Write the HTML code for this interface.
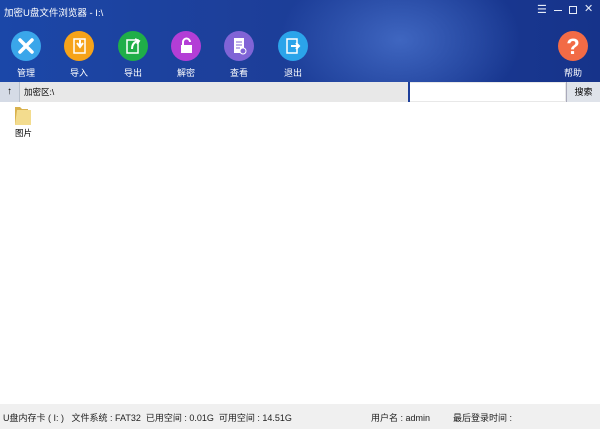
<!DOCTYPE html>
<html><head><meta charset="utf-8"><style>
*{margin:0;padding:0;box-sizing:border-box}
body{width:600px;height:429px;overflow:hidden;background:#fff;font-family:"Liberation Sans","Noto Sans CJK SC",sans-serif;position:relative}
#hd{position:absolute;left:0;top:0;width:600px;height:82px;background:radial-gradient(ellipse 120px 80px at 400px 40px,#3f66c0 0%,rgba(40,80,170,0) 100%),linear-gradient(90deg,#1b47a8 0%,#1d3f9a 40%,#1a3a94 70%,#16338a 100%)}
.t{position:absolute;left:4px;top:5px;color:#fff;font-size:9.5px}
.b{position:absolute;top:31px;width:30px;height:30px;border-radius:50%}
.b svg{position:absolute;left:0;top:0}
.l{position:absolute;top:66px;color:#fff;font-size:9px;width:40px;text-align:center}
#bar{position:absolute;top:82px;left:0;width:600px;height:20px;background:#e8e8e8}
.wc{position:absolute;top:4px;color:#e6ecf8;font-size:11px}
</style></head><body>
<div id="hd">
<div class="t">加密U盘文件浏览器 - I:\</div>
<div class="wc" style="left:537px;top:3px">☰</div>
<div style="position:absolute;left:554px;top:10px;width:8px;height:1px;background:#e6ecf8"></div>
<div style="position:absolute;left:569px;top:6px;width:8px;height:8px;border:1px solid #e6ecf8"></div>
<div class="wc" style="left:584px;top:2px">✕</div>

<div class="b" style="left:11px;background:#3aa6ea"><svg width="30" height="30"><path d="M9 9l12 12M21 9l-12 12" stroke="#fff" stroke-width="3.5" stroke-linecap="round"/></svg></div>
<div class="l" style="left:6px">管理</div>
<div class="b" style="left:64px;background:#f6a31a"><svg width="30" height="30"><rect x="10" y="8" width="11" height="14" fill="none" stroke="#fff" stroke-width="1.5"/><path d="M13 12l3 4 3-4M16 9v7" stroke="#fff" stroke-width="2" fill="none"/></svg></div>
<div class="l" style="left:59px">导入</div>
<div class="b" style="left:118px;background:#1fae48"><svg width="30" height="30"><rect x="9" y="9" width="11" height="13" fill="none" stroke="#fff" stroke-width="1.5"/><path d="M14 18c0-4 2-7 6-8M17 8l4 2-2 3" stroke="#fff" stroke-width="2" fill="none"/></svg></div>
<div class="l" style="left:113px">导出</div>
<div class="b" style="left:171px;background:#b33ed6"><svg width="30" height="30"><rect x="10" y="14" width="11" height="8" fill="#fff"/><path d="M12 14v-3a3.5 3.5 0 0 1 7 0" stroke="#fff" stroke-width="2" fill="none"/></svg></div>
<div class="l" style="left:166px">解密</div>
<div class="b" style="left:224px;background:#8064d6"><svg width="30" height="30"><rect x="10" y="7" width="10" height="15" fill="#fff"/><path d="M12 11h6M12 14h6M12 17h4" stroke="#8064d6"/><circle cx="19" cy="20" r="3" fill="#8064d6" stroke="#fff"/></svg></div>
<div class="l" style="left:219px">查看</div>
<div class="b" style="left:278px;background:#2ba4ea"><svg width="30" height="30"><rect x="9" y="8" width="10" height="14" fill="none" stroke="#fff" stroke-width="1.5"/><path d="M13 15h8M18 12l3 3-3 3" stroke="#fff" stroke-width="2" fill="none"/></svg></div>
<div class="l" style="left:273px">退出</div>
<div class="b" style="left:558px;background:#f26b46"><svg width="30" height="30"><text x="15" y="23" font-size="22" font-weight="bold" fill="#fff" text-anchor="middle" font-family="Liberation Sans">?</text></svg></div>
<div class="l" style="left:553px">帮助</div>
</div>
<div id="bar">
<div style="position:absolute;left:0;top:0;width:20px;height:20px;background:#d5dbe6;border-right:1px solid #b8c0cc;font-size:10px;text-align:center;line-height:20px">↑</div>
<div style="position:absolute;left:24px;top:4px;font-size:8.5px">加密区:\</div>
<div style="position:absolute;left:408px;top:0;width:2px;height:20px;background:#1d3f9a"></div>
<div style="position:absolute;left:410px;top:1px;width:155px;height:18px;background:#fff"></div>
<div style="position:absolute;left:566px;top:0;width:34px;height:20px;background:#dfe3ea;border-left:1px solid #aab;font-size:9px;text-align:center;line-height:20px">搜索</div>
</div>
<svg style="position:absolute;left:13px;top:105px" width="20" height="22"><path d="M2 2h5l2 2h6v16H2z" fill="#d9b24e"/><path d="M4 5h14v15H2z" fill="#f3dc8e"/></svg>
<div style="position:absolute;left:15px;top:127px;font-size:8.5px">图片</div>
<div style="position:absolute;left:0;top:404px;width:600px;height:25px;background:#f0f0f0;font-size:9px;color:#222">
<span style="position:absolute;left:3px;top:7px;white-space:nowrap">U盘内存卡 ( I: )&nbsp;&nbsp;&nbsp;文件系统 : FAT32&nbsp;&nbsp;已用空间 : 0.01G&nbsp;&nbsp;可用空间 : 14.51G</span>
<span style="position:absolute;left:371px;top:7px">用户名 : admin</span>
<span style="position:absolute;left:453px;top:7px">最后登录时间 :</span>
</div>
</body></html>
